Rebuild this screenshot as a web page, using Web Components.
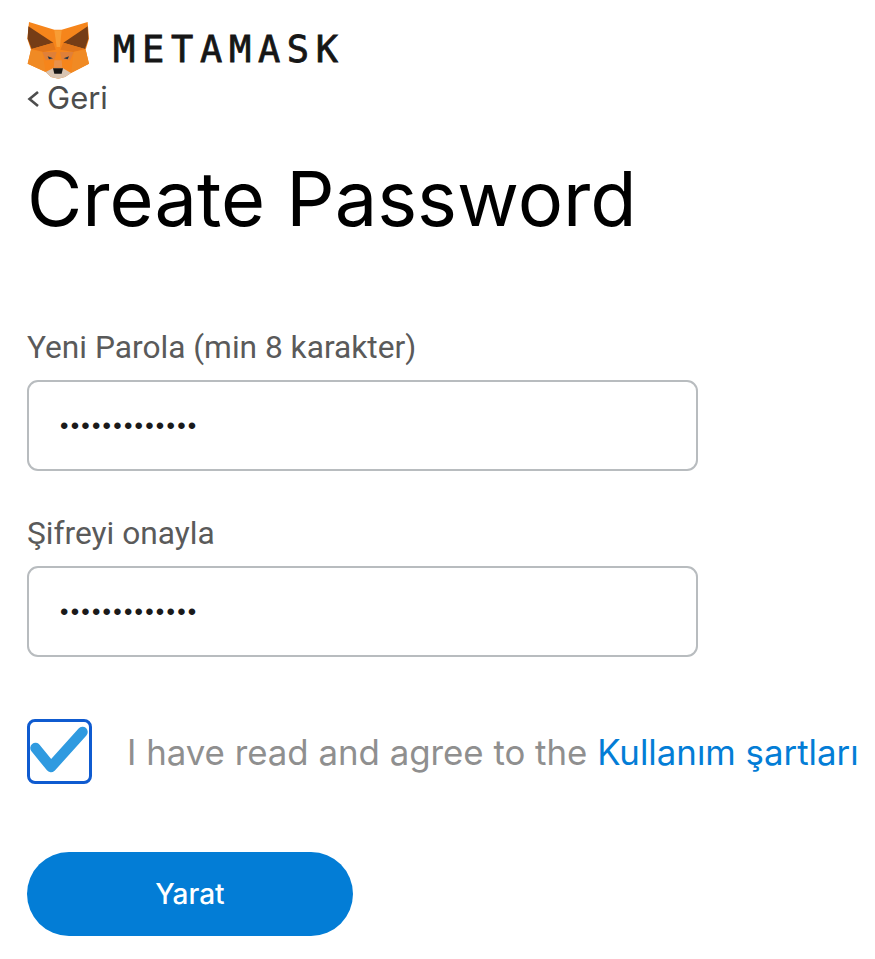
<!DOCTYPE html>
<html>
<head>
<meta charset="utf-8">
<title>Create Password</title>
<style>
    html, body { margin: 0; background: #fff; }
    body { font-family: Inter, "Liberation Sans", sans-serif; }
</style>
</head>
<body>
<mm-page>
    <mm-logo slot="logo">METAMASK</mm-logo>
    <mm-back slot="back">Geri</mm-back>
    <h1 slot="title" style="margin:0;font:400 75.7px/100px Inter, sans-serif;color:#000">Create Password</h1>
    <mm-field slot="fields" label="Yeni Parola (min 8 karakter)" value="•••••••••••••"></mm-field>
    <mm-field slot="fields" label="Şifreyi onayla" value="•••••••••••••"></mm-field>
    <mm-terms slot="terms" link="Kullanım şartları">I have read and agree to the </mm-terms>
    <mm-button slot="action">Yarat</mm-button>
</mm-page>

<script>
class MmPage extends HTMLElement {
    constructor() {
        super();
        this.attachShadow({ mode: 'open' });
        this.shadowRoot.innerHTML = `
            <style>
                :host {
                    display: flex;
                    flex-direction: column;
                    box-sizing: border-box;
                    width: 875px;
                    height: 959px;
                    padding: 21px 0 0 27px;
                    overflow: hidden;
                }
                .title { display: block; margin-top: 32px; }
                .fields { display: flex; flex-direction: column; gap: 45px; margin-top: 81px; }
                .terms { margin-top: 62px; }
                .action { margin-top: 68px; }
            </style>
            <slot name="logo"></slot>
            <slot name="back"></slot>
            <div class="title"><slot name="title"></slot></div>
            <div class="fields"><slot name="fields"></slot></div>
            <div class="terms"><slot name="terms"></slot></div>
            <div class="action"><slot name="action"></slot></div>
        `;
    }
}

class MmLogo extends HTMLElement {
    constructor() {
        super();
        this.attachShadow({ mode: 'open' });
        this.shadowRoot.innerHTML = `
            <style>
                :host { display: flex; align-items: center; gap: 24px; height: 58px; }
                svg { display: block; flex: none; }
                span {
                    font: 400 37px/1 "DejaVu Sans Mono", monospace;
                    -webkit-text-stroke: 0.8px #161616;
                    letter-spacing: 6.7px;
                    color: #161616;
                    margin-top: -1px;
                    white-space: nowrap;
                }
            </style>
            <svg width="62" height="58" viewBox="36 32 186 174">
                <polygon fill="#f6851b" points="42,35 118,58 140,58 218,35 222,85 212,118 222,160 168,188 150,200 130,205 108,200 92,185 38,160 48,118 37,85"/>
                <polygon fill="#763d16" points="40,48 115,97 50,116 38,85"/>
                <polygon fill="#763d16" points="218,48 145,97 210,116 220,85"/>
                <polygon fill="#f89d35" points="118,60 140,60 135,110 125,110"/>
                <polygon fill="#e2761b" points="115,97 50,116 85,125 122,118"/>
                <polygon fill="#e2761b" points="145,97 210,116 175,125 136,118"/>
                <polygon fill="#f08a24" points="38,160 48,118 82,125 92,185"/>
                <polygon fill="#f08a24" points="222,160 212,118 176,125 168,188"/>
                <polygon fill="#e08038" points="82,125 125,125 118,148 92,150"/>
                <polygon fill="#e08038" points="176,125 135,125 140,148 166,150"/>
                <polygon fill="#233447" points="98,138 114,144 102,147"/>
                <polygon fill="#233447" points="162,138 146,144 158,147"/>
                <polygon fill="#e8914a" points="118,150 140,150 142,172 116,172"/>
                <polygon fill="#d8c4b2" points="92,185 114,174 144,174 168,188 150,200 130,205 108,200"/>
                <polygon fill="#161616" points="114,174 144,174 140,190 118,190"/>
            </svg>
            <span><slot></slot></span>
        `;
    }
}

class MmBack extends HTMLElement {
    constructor() {
        super();
        this.attachShadow({ mode: 'open' });
        this.shadowRoot.innerHTML = `
            <style>
                :host {
                    display: flex;
                    align-items: center;
                    gap: 8px;
                    height: 38px;
                    font: 400 31px/38px Inter, sans-serif;
                    color: #4d4d4d;
                }
                svg { display: block; margin-top: 2px; }
            </style>
            <svg width="12" height="18" viewBox="0 0 12 18">
                <path d="M11 2 L2.5 9 L11 16" fill="none" stroke="#4d4d4d" stroke-width="2.6"/>
            </svg>
            <span><slot></slot></span>
        `;
    }
}

class MmField extends HTMLElement {
    constructor() {
        super();
        this.attachShadow({ mode: 'open' });
        this.shadowRoot.innerHTML = `
            <style>
                :host { display: block; width: 671px; }
                label {
                    display: block;
                    font: 400 31.7px/36px Roboto, sans-serif;
                    color: #5a5a5a;
                    margin-bottom: 14px;
                }
                .box {
                    box-sizing: border-box;
                    height: 91px;
                    display: flex;
                    align-items: center;
                    padding: 0 31px;
                    border: 2px solid #b8bcbf;
                    border-radius: 11px;
                    font: 400 24px/1 "Liberation Sans", sans-serif;
                    letter-spacing: 2.25px;
                    color: #1a1a1a;
                }
            </style>
            <label></label>
            <div class="box"></div>
        `;
    }

    connectedCallback() {
        this.shadowRoot.querySelector('label').textContent = this.getAttribute('label');
        this.shadowRoot.querySelector('.box').textContent = this.getAttribute('value');
    }
}

class MmTerms extends HTMLElement {
    constructor() {
        super();
        this.attachShadow({ mode: 'open' });
        this.shadowRoot.innerHTML = `
            <style>
                :host {
                    display: flex;
                    align-items: center;
                    gap: 35px;
                    font: 400 34.8px/40px Inter, sans-serif;
                    color: #8f8f8f;
                }
                span { white-space: pre; }
                .check {
                    box-sizing: border-box;
                    flex: none;
                    width: 65px;
                    height: 65px;
                    border: 3px solid #0f5bd0;
                    border-radius: 8px;
                }
                svg { display: block; }
                a { color: #037dd6; text-decoration: none; }
            </style>
            <div class="check"><svg width="59" height="59" viewBox="0 0 59 59">
                <path d="M5.5 26 L21 45 L52.5 10" fill="none" stroke="#2f9ae0" stroke-width="10.5" stroke-linejoin="round" stroke-linecap="round"/>
            </svg></div>
            <span><slot></slot><a href="#"></a></span>
        `;
    }

    connectedCallback() {
        this.shadowRoot.querySelector('a').textContent = this.getAttribute('link');
    }
}

class MmButton extends HTMLElement {
    constructor() {
        super();
        this.attachShadow({ mode: 'open' });
        this.shadowRoot.innerHTML = `
            <style>
                :host {
                    display: flex;
                    align-items: center;
                    justify-content: center;
                    width: 326px;
                    height: 84px;
                    border-radius: 42px;
                    background: #037dd6;
                    color: #fff;
                    font: 500 28px/1 Inter, sans-serif;
                }
            </style>
            <slot></slot>
        `;
    }
}

customElements.define('mm-page', MmPage);
customElements.define('mm-logo', MmLogo);
customElements.define('mm-back', MmBack);
customElements.define('mm-field', MmField);
customElements.define('mm-terms', MmTerms);
customElements.define('mm-button', MmButton);
</script>
</body>
</html>
